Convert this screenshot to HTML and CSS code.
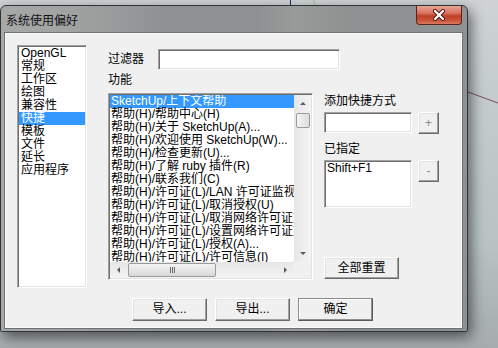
FILE: index.html
```html
<!DOCTYPE html>
<html lang="zh-CN">
<head>
<meta charset="utf-8">
<title>系统使用偏好</title>
<link rel="stylesheet" href="styles.css">
</head>
<body>
<div class="desktop">
  <svg class="canvas-lines" width="498" height="348" viewBox="0 0 498 348">
    <line x1="290.5" y1="0" x2="290.5" y2="6" stroke="#1f2d8a" stroke-width="1"/>
    <path d="M313 0 Q316 3 315 6" fill="none" stroke="#9fbf9a" stroke-width="1"/>
    <line x1="468" y1="92" x2="498" y2="103" stroke="#7b4c55" stroke-width="1"/>
  </svg>
  <div class="window">
    <div class="titlebar">
      <span class="title">系统使用偏好</span>
      <div class="close">
        <svg width="14" height="12" viewBox="0 0 14 12">
          <path d="M3 2 L11 10 M11 2 L3 10" stroke="#4a1a12" stroke-width="4" stroke-linecap="round"/>
          <path d="M3 2 L11 10 M11 2 L3 10" stroke="#ffffff" stroke-width="2.2" stroke-linecap="round"/>
        </svg>
      </div>
    </div>
    <div class="client">
      <div class="main">
        <ul class="cats sunken">
          <li>OpenGL</li>
          <li>常规</li>
          <li>工作区</li>
          <li>绘图</li>
          <li>兼容性</li>
          <li class="sel">快捷</li>
          <li>模板</li>
          <li>文件</li>
          <li>延长</li>
          <li>应用程序</li>
        </ul>
        <div class="center">
          <div class="filter-row">
            <span class="filter-label">过滤器</span>
            <div class="filter-input sunken"></div>
          </div>
          <div class="lbl">功能</div>
          <div class="lower">
            <div class="funclist sunken">
              <div class="fl-body">
                <ul class="items">
                  <li class="sel">SketchUp/上下文帮助</li>
                  <li>帮助(H)/帮助中心(H)</li>
                  <li>帮助(H)/关于 SketchUp(A)...</li>
                  <li>帮助(H)/欢迎使用 SketchUp(W)...</li>
                  <li>帮助(H)/检查更新(U)...</li>
                  <li>帮助(H)/了解 ruby 插件(R)</li>
                  <li>帮助(H)/联系我们(C)</li>
                  <li>帮助(H)/许可证(L)/LAN 许可证监视程序</li>
                  <li>帮助(H)/许可证(L)/取消授权(U)</li>
                  <li>帮助(H)/许可证(L)/取消网络许可证文件</li>
                  <li>帮助(H)/许可证(L)/设置网络许可证文件</li>
                  <li>帮助(H)/许可证(L)/授权(A)...</li>
                  <li>帮助(H)/许可证(L)/许可信息(I)</li>
                </ul>
                <div class="vscroll">
                  <div class="sbtn"><span class="arr up"></span></div>
                  <div class="vtrack"><div class="vthumb"></div></div>
                  <div class="sbtn"><span class="arr down"></span></div>
                </div>
              </div>
              <div class="hscroll">
                <div class="sbtn"><span class="arr left"></span></div>
                <div class="htrack"><div class="hthumb"><span class="grip"></span></div></div>
                <div class="sbtn"><span class="arr right"></span></div>
                <div class="corner"></div>
              </div>
            </div>
            <div class="rightcol">
              <div class="rlbl">添加快捷方式</div>
              <div class="rrow">
                <div class="sc-input sunken"></div>
                <div class="btn small-btn">+</div>
              </div>
              <div class="rlbl gap7">已指定</div>
              <div class="rrow">
                <div class="assigned sunken">Shift+F1</div>
                <div class="btn small-btn">-</div>
              </div>
              <div class="btn reset-btn">全部重置</div>
            </div>
          </div>
        </div>
      </div>
      <div class="buttons">
        <div class="btn dlg-btn">导入...</div>
        <div class="btn dlg-btn">导出...</div>
        <div class="btn dlg-btn default">确定</div>
      </div>
    </div>
  </div>
</div>
</body>
</html>
```
FILE: styles.css
```css
* { box-sizing: border-box; }
html, body { margin: 0; padding: 0; }
body {
  width: 498px;
  height: 348px;
  overflow: hidden;
  font-family: "Liberation Sans", "Noto Sans CJK SC", sans-serif;
  font-size: 12px;
  line-height: 13px;
  color: #000;
}
.desktop {
  position: relative;
  width: 498px;
  height: 348px;
  padding-top: 5px;
  background: linear-gradient(180deg, #cfd3d3 0, #c3cbcc 30%, #b9c3c4 70%, #aab1b2 92%, #a6acac 100%);
}
.canvas-lines { position: absolute; left: 0; top: 0; }
.window {
  position: relative;
  width: 468px;
  height: 327px;
  border: 1px solid #2f3537;
  border-radius: 6px 6px 2px 2px;
  background: linear-gradient(90deg, #a7a9a9 0%, #a0a2a2 15%, #8f9293 35%, #8e9192 55%, #999b9a 63%, #8e9191 75%, #8f9292 100%);
  box-shadow: 3px 5px 14px rgba(0, 0, 0, 0.55);
  display: flex;
  flex-direction: column;
}
.titlebar {
  height: 27px;
  display: flex;
  justify-content: space-between;
  align-items: flex-start;
  padding-left: 5px;
}
.title {
  line-height: 27px;
  font-family: "Noto Sans CJK SC", sans-serif;
  font-size: 12px;
  color: #111;
}
.close {
  width: 46px;
  height: 19px;
  margin-right: 5px;
  border: 1px solid #5b2219;
  border-top: none;
  border-radius: 0 0 4px 4px;
  background: linear-gradient(180deg, #e8a594 0%, #d9725d 40%, #bf3f27 55%, #c9553a 80%, #db7a60 100%);
  display: flex;
  align-items: center;
  justify-content: center;
}
.client {
  flex: 1;
  margin: 0 5px 3px 4px;
  background: #f0f0f0;
  border: 1px solid #fafafa;
  box-shadow: 0 0 0 1px #6e7475;
  padding: 11px 0 0 11px;
}
.main { display: flex; align-items: flex-start; }
.sunken {
  background: #fff;
  border: 1px solid;
  border-color: #a0a0a0 #ffffff #ffffff #a0a0a0;
  box-shadow: inset 1px 1px 0 #6f6f6f, inset -1px -1px 0 #e3e3e3;
}
ul { list-style: none; margin: 0; padding: 0; }
.cats {
  width: 70px;
  height: 243px;
  padding: 1px 1px 0 1px;
}
.cats li {
  height: 13px;
  line-height: 13px;
  padding-left: 2px;
  white-space: nowrap;
}
.sel { background: #3399ff; color: #fff; }
.center { margin-left: 21px; margin-top: 4px; }
.filter-row { display: flex; align-items: center; height: 21px; }
.filter-label { width: 50px; }
.filter-input { width: 182px; height: 21px; }
.lbl { line-height: 16px; margin-top: 2px; }
.lower { display: flex; align-items: flex-start; margin-top: 5px; }
.funclist {
  width: 205px;
  height: 187px;
  padding: 1px;
  display: flex;
  flex-direction: column;
}
.fl-body { display: flex; height: 167px; }
.items {
  width: 184px;
  height: 167px;
  overflow: hidden;
}
.items li {
  height: 13px;
  line-height: 13px;
  padding-left: 1px;
  white-space: nowrap;
}
.vscroll {
  width: 17px;
  display: flex;
  flex-direction: column;
  background: linear-gradient(90deg, #e6e6e6, #f4f4f4);
}
.sbtn {
  width: 17px;
  height: 17px;
  flex: none;
  display: flex;
  align-items: center;
  justify-content: center;
}
.vtrack { flex: 1; padding: 1px 1px 0 2px; }
.vthumb {
  height: 15px;
  border: 1px solid #9a9a9a;
  border-radius: 2px;
  background: linear-gradient(90deg, #f4f4f4, #dcdcdc);
}
.arr { width: 0; height: 0; border: 3px solid transparent; }
.arr.up { border-bottom: 3px solid #5a5a5a; border-top-width: 0; }
.arr.down { border-top: 3px solid #5a5a5a; border-bottom-width: 0; }
.arr.left { border-right: 3px solid #5a5a5a; border-left-width: 0; }
.arr.right { border-left: 3px solid #5a5a5a; border-right-width: 0; }
.hscroll {
  height: 16px;
  display: flex;
  background: linear-gradient(180deg, #e6e6e6, #f4f4f4);
}
.hscroll .sbtn { height: 16px; }
.htrack { flex: 1; padding: 1px 0 0 1px; }
.hthumb {
  width: 88px;
  height: 14px;
  border: 1px solid #9a9a9a;
  border-radius: 2px;
  background: linear-gradient(180deg, #f4f4f4, #d9d9d9);
  display: flex;
  align-items: center;
  justify-content: center;
}
.grip {
  width: 5px;
  height: 6px;
  border-left: 1px solid #6a6a6a;
  border-right: 1px solid #6a6a6a;
  background: linear-gradient(90deg, transparent 1px, #6a6a6a 1px, #6a6a6a 2px, transparent 2px);
}
.corner { width: 17px; background: #f0f0f0; }
.rightcol { margin-left: 11px; display: flex; flex-direction: column; align-items: flex-start; }
.rlbl { line-height: 16px; }
.gap7 { margin-top: 7px; }
.rrow { display: flex; align-items: flex-start; margin-top: 3px; }
.sc-input { width: 88px; height: 21px; }
.assigned {
  width: 88px;
  height: 48px;
  padding: 1px 0 0 2px;
  line-height: 13px;
}
.btn {
  background: #f0f0f0;
  border: 1px solid;
  border-color: #ffffff #6a6a6a #6a6a6a #ffffff;
  box-shadow: inset -1px -1px 0 #a0a0a0, inset 1px 1px 0 #e3e3e3;
  display: flex;
  align-items: center;
  justify-content: center;
  white-space: nowrap;
}
.small-btn {
  width: 21px;
  height: 22px;
  margin-left: 6px;
  color: #8c8c8c;
}
.reset-btn { width: 75px; height: 22px; margin-top: 49px; }
.buttons {
  display: flex;
  gap: 8px;
  margin: 10px 0 0 115px;
}
.dlg-btn { width: 75px; height: 23px; }
.default { border-color: #8a8a8a #5a5a5a #5a5a5a #8a8a8a; box-shadow: inset -1px -1px 0 #8f8f8f, inset 1px 1px 0 #ffffff; }
```
